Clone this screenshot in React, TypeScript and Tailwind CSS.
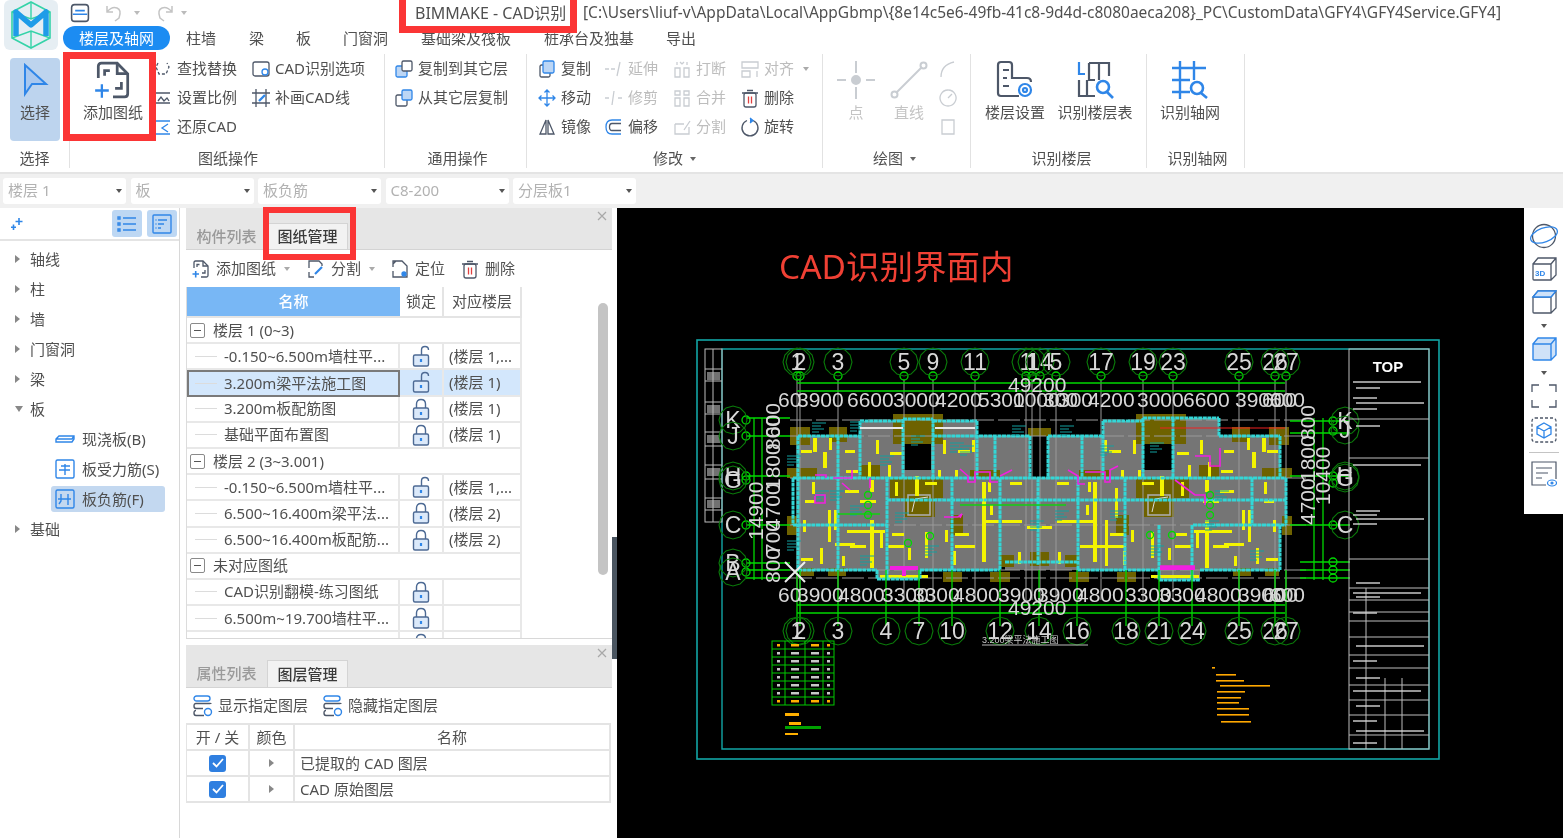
import React from "react";

const BLUE = "#2f86e8";
const SLATE = "#4d5768";
const FAINT = "#c9cdd2";

type IconProps = { size?: number; children: React.ReactNode; className?: string };

const Ico = ({ size = 20, children, className }: IconProps) => (
  <svg width={size} height={size} viewBox="0 0 20 20" fill="none" strokeWidth="1.3" stroke={SLATE} className={`shrink-0 ${className ?? ""}`}>
    {children}
  </svg>
);

const Caret = ({ color = "#666" }: { color?: string }) => (
  <span className="inline-block w-0 h-0 border-l-[3.5px] border-r-[3.5px] border-t-[4px] border-l-transparent border-r-transparent" style={{ borderTopColor: color }} />
);

const SheetPlus = ({ size = 20, thin }: { size?: number; thin?: boolean }) => (
  <Ico size={size}>
    <path d="M3 9V3.5Q3 2 4.5 2H12L17 7V16.5Q17 18 15.5 18H10" />
    <path d="M12 2V7H17" />
    <path d="M6 8V5.5H8.5M14 11V14H11" />
    <path d="M1.5 15H8M4.7 12V18.5" stroke={BLUE} strokeWidth={thin ? 1.1 : 1.6} />
  </Ico>
);

const Lock = ({ open }: { open: boolean }) => (
  <svg width="22" height="22" viewBox="0 0 22 22" fill="none" stroke="#4d6a94" strokeWidth="1.4">
    <rect x="3.5" y="10" width="15" height="11" rx="1.5" fill="#dbe9fa" />
    {open ? <path d="M11.5 10V5Q11.5 1.5 15 1.5T18.5 5" /> : <path d="M6.5 10V6Q6.5 1.5 11 1.5T15.5 6V10" />}
    <path d="M11 14V17" stroke={BLUE} strokeWidth="2.2" />
  </svg>
);

const Logo = () => (
  <div className="w-[54px] h-[50px] ml-[4px] bg-[#e6eef3] rounded-md flex items-center justify-center">
    <svg width="44" height="48" viewBox="0 0 44 48" fill="none">
      <path d="M22 1L41 11V37L22 47L3 37V11Z" stroke="#35d3a8" strokeWidth="1.6" />
      <path d="M22 1V18M22 30V47M3 11L22 18L41 11M3 37L22 30L41 37" stroke="#35d3a8" strokeWidth="1.4" />
      <path d="M7 35V11L22 24L37 11V35" stroke="#1f9ce8" strokeWidth="5.5" strokeLinejoin="round" />
    </svg>
  </div>
);

const Btn = ({ icon, label, muted, caret }: { icon: React.ReactNode; label: string; muted?: boolean; caret?: boolean }) => (
  <div className={`flex items-center gap-[4px] h-[29px] whitespace-nowrap ${muted ? "text-[#bdbdbd]" : "text-[#505050]"}`}>
    {icon}
    <span>{label}</span>
    {caret && <span className="ml-[5px] flex"><Caret color="#aaa" /></span>}
  </div>
);

const Group = ({ label, width, caret, labelClass, children }: { label: string; width: string; caret?: boolean; labelClass?: string; children: React.ReactNode }) => (
  <div className={`${width} shrink-0 h-[114px] border-r border-[#e2e2e2] flex flex-col`}>
    <div className="h-[86px] flex">{children}</div>
    <div className={`flex-1 flex items-center justify-center gap-[7px] text-[#505050] pt-[9px] ${labelClass ?? ""}`}>
      {label}
      {caret && <Caret />}
    </div>
  </div>
);

const Big = ({ icon, label, muted }: { icon: React.ReactNode; label: string; muted?: boolean }) => (
  <div className={`flex flex-col items-center pt-[5px] whitespace-nowrap ${muted ? "text-[#c4c4c4]" : "text-[#505050]"}`}>
    <div className="h-[41px] flex items-center">{icon}</div>
    <div className="mt-[5px]">{label}</div>
  </div>
);

const Faint = ({ d }: { d: string }) => (
  <Ico>
    <path d={d} stroke={FAINT} />
  </Ico>
);

const Ribbon = () => (
  <div className="h-[122px] flex items-start pt-[2px] border-b-2 border-[#e4e4e4]">
    <Group label="选择" width="w-[70px]">
      <div className="ml-[10px] mt-[4px] w-[50px] h-[83px] bg-[#bdd4ee] rounded-[4px] flex flex-col items-center pt-[5px] text-[#505050]">
        <svg width="30" height="34" viewBox="0 0 30 34" fill="#a9c8ef" stroke={BLUE} strokeWidth="2"><path d="M5 2V31L12 21L26 21Z" /></svg>
        <div className="mt-[8px]">选择</div>
      </div>
    </Group>
    <Group label="图纸操作" width="w-[315px]" labelClass="pl-[2px]">
      <div className="w-[84px] pl-[2px]">
        <Big icon={<SheetPlus size={42} thin />} label="添加图纸" />
      </div>
      <div className="w-[96px] -ml-px mr-px">
        <Btn label="查找替换" icon={<Ico><path d="M5 4L3 8L6 15H13L16 8L14 4" strokeDasharray="3 2" /></Ico>} />
        <Btn label="设置比例" icon={<Ico><path d="M3 5H17M3 15H17M5 13L8 9L11 13L14 10L16 13" /></Ico>} />
        <Btn label="还原CAD" icon={<Ico><path d="M2 4H17M2 17H17M15 7L9 11L15 15" stroke={BLUE} /></Ico>} />
      </div>
      <div className="pl-[1px]">
        <Btn label="CAD识别选项" icon={<Ico><rect x="2" y="3" width="16" height="14" rx="2" /><circle cx="14" cy="13" r="3" stroke={BLUE} /></Ico>} />
        <Btn label="补画CAD线" icon={<Ico><path d="M5 1V19M15 1V19M1 5H19M1 15H19" /><path d="M8 13L14 7" stroke={BLUE} strokeWidth="2.4" /></Ico>} />
      </div>
    </Group>
    <Group label="通用操作" width="w-[142px]" labelClass="pl-[4px]">
      <div className="pl-[9px]">
        <Btn label="复制到其它层" icon={<Ico><rect x="2" y="7" width="11" height="11" rx="1.5" fill="#bcd6f5" stroke={BLUE} /><rect x="8" y="2" width="10" height="10" rx="1.5" fill="#fff" /></Ico>} />
        <Btn label="从其它层复制" icon={<Ico><rect x="2" y="7" width="11" height="11" rx="1.5" /><rect x="8" y="2" width="10" height="10" rx="1.5" fill="#bcd6f5" stroke={BLUE} /></Ico>} />
      </div>
    </Group>
    <Group label="修改" width="w-[296px]" caret>
      <div className="w-[77px] pl-[10px]">
        <Btn label="复制" icon={<Ico><rect x="3" y="6" width="10" height="12" rx="1.5" /><rect x="6" y="2" width="11" height="12" rx="1.5" fill="#bcd6f5" stroke={BLUE} /></Ico>} />
        <Btn label="移动" icon={<Ico><path d="M10 2V18M2 10H18M7.5 4.5L10 2L12.5 4.5M7.5 15.5L10 18L12.5 15.5M4.5 7.5L2 10L4.5 12.5M15.5 7.5L18 10L15.5 12.5" stroke={BLUE} /></Ico>} />
        <Btn label="镜像" icon={<Ico><path d="M9 3L3 17H9ZM11 3L17 17H11Z" /></Ico>} />
      </div>
      <div className="w-[68px]">
        <Btn muted label="延伸" icon={<Faint d="M1 10H5M7 10H11M16 3L13 17" />} />
        <Btn muted label="修剪" icon={<Faint d="M1 10H5M14 10H18M10 3L8 17" />} />
        <Btn label="偏移" icon={<Ico><path d="M17 3H8Q2 3 2 10T8 17H17" stroke={BLUE} /><path d="M17 6.5H8Q5.5 6.5 5.5 10T8 13.5H17" /></Ico>} />
      </div>
      <div className="w-[68px]">
        <Btn muted label="打断" icon={<Faint d="M3 9H8V18H3ZM12 9H17V18H12ZM5 6V3M15 6V3M8 3L10 5M12 3L10 5" />} />
        <Btn muted label="合并" icon={<Faint d="M3 10H8V18H3ZM12 10H17V18H12ZM3 3H8V7H3ZM12 3H17V7H12Z" />} />
        <Btn muted label="分割" icon={<Faint d="M3 7H12M3 7V17H17V10M12 13L18 4" />} />
      </div>
      <div>
        <Btn muted caret label="对齐" icon={<Faint d="M2 3H18V9H2ZM2 12H10V18H2ZM17 12V18" />} />
        <Btn label="删除" icon={<Ico><rect x="4" y="5" width="12" height="14" rx="2" /><path d="M7 2.5H13M2 5H18" /><path d="M8.5 8.5V15.5M11.5 8.5V15.5" stroke="#e04040" /></Ico>} />
        <Btn label="旋转" icon={<Ico><path d="M7 3.5A8 8 0 1 0 13 3.5" /><path d="M10 1L13 3.5L10 6" fill={BLUE} stroke={BLUE} /></Ico>} />
      </div>
    </Group>
    <Group label="绘图" width="w-[148px]" caret labelClass="pr-[4px]">
      <div className="w-[66px] flex justify-center">
        <Big muted label="点" icon={<svg width="40" height="40" viewBox="0 0 40 40" fill="none" stroke={FAINT} strokeWidth="2"><path d="M20 1V13M20 27V39M1 20H10M30 20H39" /><circle cx="20" cy="20" r="4" fill={FAINT} /></svg>} />
      </div>
      <div className="w-[40px] flex justify-center">
        <Big muted label="直线" icon={<svg width="38" height="38" viewBox="0 0 38 38" fill="none" stroke={FAINT} strokeWidth="2"><path d="M6 32L32 6" /><circle cx="4.5" cy="33.5" r="3" /><circle cx="33.5" cy="4.5" r="3" /></svg>} />
      </div>
      <div className="ml-[9px]">
        <div className="h-[29px] flex items-center"><Faint d="M3 18Q3 6 16 3" /></div>
        <div className="h-[29px] flex items-center"><Faint d="M10 2A8 8 0 1 0 10.1 2M10 10L14 6" /></div>
        <div className="h-[29px] flex items-center"><Faint d="M4 3H16V17H4Z" /></div>
      </div>
    </Group>
    <Group label="识别楼层" width="w-[176px]" labelClass="pl-[6px]">
      <div className="w-[86px] flex justify-center pl-[2px]">
        <Big label="楼层设置" icon={<svg width="40" height="40" viewBox="0 0 40 40" fill="none" stroke={SLATE} strokeWidth="2.2"><path d="M24 36H6Q3 36 3 33V5Q3 2 6 2H14Q17 2 17 5V18H32Q36 18 36 22" /><path d="M8 10H14M8 18H12M8 26H14" /><circle cx="30" cy="30" r="6" stroke={BLUE} /><circle cx="30" cy="30" r="2" stroke={BLUE} /></svg>} />
      </div>
      <div className="flex justify-center w-[76px]">
        <Big label="识别楼层表" icon={<svg width="40" height="40" viewBox="0 0 40 40" fill="none" stroke={SLATE} strokeWidth="2.2"><path d="M4 2V14H10" stroke={BLUE} /><path d="M14 3H34V16M24 3V20M14 3V20H20M4 20V36H20M12 20V36" /><circle cx="28" cy="27" r="6" stroke={BLUE} strokeWidth="2.6" /><path d="M32 32L38 38" stroke={BLUE} strokeWidth="2.6" /></svg>} />
      </div>
    </Group>
    <Group label="识别轴网" width="w-[98px]" labelClass="pl-[4px]">
      <div className="w-[86px] flex justify-center">
        <Big label="识别轴网" icon={<svg width="40" height="40" viewBox="0 0 40 40" fill="none" stroke={BLUE} strokeWidth="2.4"><path d="M10 1V39M24 1V20M2 8H36M2 20H20M2 32H20" /><circle cx="27" cy="28" r="6" strokeWidth="2.6" /><path d="M31 33L37 38" strokeWidth="2.6" /></svg>} />
      </div>
    </Group>
  </div>
);

const selects = ["楼层 1", "板", "板负筋", "C8-200", "分层板1"];

const Selects = () => (
  <div className="h-[34px] pb-[1px] bg-[#f0f0f0] flex items-center gap-[4.5px] pl-[3px]">
    {selects.map((s) => (
      <div key={s} className="w-[123px] h-[26px] bg-white rounded-[3px] flex items-center justify-between pl-[5px] pr-[4px] text-[#b2b2b2]">
        {s}
        <Caret color="#555" />
      </div>
    ))}
  </div>
);

const tree = ["轴线", "柱", "墙", "门窗洞", "梁"];

const TreeArrow = ({ down }: { down?: boolean }) =>
  down ? (
    <span className="w-0 h-0 border-l-[4px] border-r-[4px] border-t-[6px] border-l-transparent border-r-transparent border-t-[#888]" />
  ) : (
    <span className="w-0 h-0 border-t-[4px] border-b-[4px] border-l-[5px] border-t-transparent border-b-transparent border-l-[#888]" />
  );

const TreeRow = ({ label, down }: { label: string; down?: boolean }) => (
  <div className="h-[30px] flex items-center text-[#505050]">
    <span className="w-[30px] pl-[15px] flex items-center"><TreeArrow down={down} /></span>
    {label}
  </div>
);

const TreeChild = ({ label, active, icon }: { label: string; active?: boolean; icon: React.ReactNode }) => (
  <div className="h-[30px] flex items-center">
    <div className={`ml-[51px] mr-[14px] flex-1 h-[26px] rounded-[3px] flex items-center gap-[6px] pl-[3px] text-[#505050] ${active ? "bg-[#c3d8f0]" : ""}`}>
      {icon}
      {label}
    </div>
  </div>
);

const LeftPanel = () => (
  <div className="w-[180px] shrink-0 border-r border-[#d8d8d8]">
    <div className="h-[33px] flex items-center border-b-2 border-[#e4e4e4] pl-[10px] pr-[2px]">
      <svg width="14" height="14" viewBox="0 0 14 14" stroke={BLUE} strokeWidth="1.6"><path d="M9 1V8M5.5 4.5H12.5M3.5 7.5V13M1 10.2H6" /></svg>
      <div className="ml-auto flex gap-[5px]">
        <div className="w-[30px] h-[27px] bg-[#bdd7f3] rounded-[3px] flex items-center justify-center">
          <svg width="20" height="18" viewBox="0 0 20 18" fill="none" stroke={BLUE} strokeWidth="1.4"><path d="M6 3H19M6 9H19M6 15H19M1 2H3V4H1ZM1 8H3V10H1ZM1 14H3V16H1Z" /></svg>
        </div>
        <div className="w-[30px] h-[27px] bg-[#bdd7f3] rounded-[3px] flex items-center justify-center">
          <svg width="20" height="20" viewBox="0 0 20 20" fill="none" stroke={BLUE} strokeWidth="1.4"><rect x="1" y="1" width="18" height="18" rx="1" /><path d="M6 6H15M6 10H12M6 14H9M3.5 6H4.5M3.5 10H4.5M3.5 14H4.5" /></svg>
        </div>
      </div>
    </div>
    <div className="pt-[3px]">
      {tree.map((t) => <TreeRow key={t} label={t} />)}
      <TreeRow label="板" down />
      <TreeChild label="现浇板(B)" icon={<svg width="22" height="20" viewBox="0 0 22 20" fill="none" stroke={BLUE} strokeWidth="1.4"><path d="M2 10L5 7H20V10L18 13H2ZM2 10H18L20 7" /></svg>} />
      <TreeChild label="板受力筋(S)" icon={<svg width="22" height="22" viewBox="0 0 22 22" fill="none" stroke={BLUE} strokeWidth="1.4"><rect x="2" y="2" width="18" height="18" rx="1.5" /><path d="M7 8H16M5 12H16M11 6V17" /></svg>} />
      <TreeChild label="板负筋(F)" active icon={<svg width="22" height="22" viewBox="0 0 22 22" fill="none" stroke={BLUE} strokeWidth="1.4"><rect x="2" y="2" width="18" height="18" rx="1.5" /><path d="M7 6V13L5 16M14 6V17M4 11H17" /></svg>} />
      <TreeRow label="基础" />
    </div>
  </div>
);

const CloseStrip = () => (
  <div className="h-[15px] bg-[#e6e6e6] flex items-center justify-end pr-[5px]">
    <svg width="10" height="10" viewBox="0 0 10 10" stroke="#a8a8a8" strokeWidth="1.2"><path d="M1 1L9 9M9 1L1 9" /></svg>
  </div>
);

const Tabs = ({ first, second, height }: { first: string; second: string; height: string }) => (
  <div className={`${height} bg-[#e6e6e6] border-b border-[#d4d4d4] flex items-stretch font-medium`}>
    <div className="w-[81px] flex items-center justify-center text-[#9a9a9a]">{first}</div>
    <div className="w-[81px] bg-[#f2f2f2] border-x border-t border-[#d4d4d4] flex items-center justify-center text-[#3a3a3a]">{second}</div>
  </div>
);

type Row =
  | { group: string }
  | { name: string; open?: boolean; floor?: string; selected?: boolean };

const rows: Row[] = [
  { group: "楼层 1 (0~3)" },
  { name: "-0.150~6.500m墙柱平...", open: true, floor: "(楼层 1,..." },
  { name: "3.200m梁平法施工图", open: true, floor: "(楼层 1)", selected: true },
  { name: "3.200m板配筋图", floor: "(楼层 1)" },
  { name: "基础平面布置图", floor: "(楼层 1)" },
  { group: "楼层 2 (3~3.001)" },
  { name: "-0.150~6.500m墙柱平...", open: true, floor: "(楼层 1,..." },
  { name: "6.500~16.400m梁平法...", floor: "(楼层 2)" },
  { name: "6.500~16.400m板配筋...", floor: "(楼层 2)" },
  { group: "未对应图纸" },
  { name: "CAD识别翻模-练习图纸" },
  { name: "6.500m~19.700墙柱平..." },
  { name: "" },
];

const DrawingTable = () => (
  <div className="relative h-[352px] overflow-hidden border-b border-[#d8d8d8]">
    <div className="w-[336px] border-l border-[#dcdcdc]">
      <div className="flex h-[31px] border-b-2 border-[#e4e4e4]">
        <div className="w-[213px] bg-[#78b7f5] text-white flex items-center justify-center font-medium">名称</div>
        <div className="w-[44px] border-r-2 border-[#e4e4e4] flex items-center justify-center text-[#505050]">锁定</div>
        <div className="w-[78px] border-r-2 border-[#e4e4e4] flex items-center justify-center text-[#505050]">对应楼层</div>
      </div>
      {rows.map((r, i) =>
        "group" in r ? (
          <div key={i} className="h-[26.2px] border-b-2 border-r-2 border-[#e8e8e8] flex items-center text-[#505050]">
            <span className="ml-[3px] w-[15px] h-[15px] border border-[#8a8a8a] rounded-[2px] flex items-center justify-center mr-[8px]">
              <span className="w-[7px] h-px bg-[#555]" />
            </span>
            {r.group}
          </div>
        ) : (
          <div key={i} className={`h-[26.2px] flex border-[#e8e8e8] ${r.selected ? "bg-[#d3e7fc]" : ""}`}>
            <div className={`w-[213px] flex items-center whitespace-nowrap text-[#505050] ${r.selected ? "border-2 border-[#7a7a7a]" : "border-b-2 border-r-2 border-[#e8e8e8]"}`}>
              <span className={`${r.selected ? "ml-[6px]" : "ml-[8px]"} w-[22px] mr-[7px] h-px bg-[#dcdcdc] shrink-0`} />
              <span>{r.name}</span>
            </div>
            <div className="w-[44px] border-b-2 border-r-2 border-[#e8e8e8] flex items-center justify-center">
              <Lock open={!!r.open} />
            </div>
            <div className="w-[78px] border-b-2 border-r-2 border-[#e8e8e8] flex items-center pl-[5px] text-[#505050] whitespace-nowrap">{r.floor}</div>
          </div>
        )
      )}
    </div>
    <div className="absolute right-[4px] top-[16px] w-[10px] h-[272px] bg-[#c4c4c4] rounded-full" />
  </div>
);

const ToolBtn = ({ icon, label, caret }: { icon: React.ReactNode; label: string; caret?: boolean }) => (
  <div className="flex items-center gap-[5px] text-[#505050] whitespace-nowrap">
    {icon}
    {label}
    {caret && <span className="ml-[3px] flex"><Caret color="#aaa" /></span>}
  </div>
);

const layerRows = ["已提取的 CAD 图层", "CAD 原始图层"];

const LayerIcon = () => (
  <svg width="20" height="22" viewBox="0 0 20 22" fill="none" stroke={BLUE} strokeWidth="1.4">
    <rect x="1" y="1" width="16" height="5" rx="2.5" />
    <path d="M3 8.5H17Q18 8.5 18 9M3 8.5Q1 8.5 1 11T3 13.5H10M3 15.5Q1 15.5 1 18T3 20.5H11" stroke={SLATE} />
    <circle cx="15" cy="17" r="3.5" />
  </svg>
);

const MiddlePanel = () => (
  <div className="w-[426px] shrink-0 ml-[6px] flex flex-col">
    <CloseStrip />
    <Tabs first="构件列表" second="图纸管理" height="h-[27px]" />
    <div className="h-[37px] flex items-center pl-[5px]">
      <ToolBtn caret label="添加图纸" icon={<SheetPlus />} />
      <div className="ml-[16px]"><ToolBtn caret label="分割" icon={<Ico><path d="M3 9V2H13L16 5V7M3 13V18H8" /><path d="M9 15L16 8" stroke={BLUE} strokeWidth="2.2" /></Ico>} /></div>
      <div className="ml-[15px]"><ToolBtn label="定位" icon={<Ico><path d="M3 8V2H12L17 7V18H3V12M6 2L3 5" /><circle cx="14" cy="15" r="2" fill={BLUE} stroke={BLUE} /></Ico>} /></div>
      <div className="ml-[15px]"><ToolBtn label="删除" icon={<Ico><rect x="4" y="5" width="12" height="14" rx="2" /><path d="M7 2.5H13M2 5H18" /><path d="M8.5 8.5V15.5M11.5 8.5V15.5" stroke="#e04040" /></Ico>} /></div>
    </div>
    <DrawingTable />
    <div className="h-[6px]" />
    <CloseStrip />
    <Tabs first="属性列表" second="图层管理" height="h-[28px]" />
    <div className="h-[35px] flex items-center gap-[15px] pl-[7px]">
      <ToolBtn label="显示指定图层" icon={<LayerIcon />} />
      <ToolBtn label="隐藏指定图层" icon={<LayerIcon />} />
    </div>
    <div className="border-t-2 border-[#e4e4e4] border-l border-[#dcdcdc] mr-[1px] text-[#505050]">
      <div className="flex h-[26px] border-b-2 border-[#e4e4e4] items-stretch">
        <div className="w-[63px] border-r-2 border-[#e4e4e4] flex items-center justify-center">开 / 关</div>
        <div className="w-[45px] border-r-2 border-[#e4e4e4] flex items-center justify-center">颜色</div>
        <div className="flex-1 flex items-center justify-center border-r-2 border-[#e4e4e4]">名称</div>
      </div>
      {layerRows.map((l) => (
        <div key={l} className="flex h-[26px] border-b-2 border-[#e4e4e4] items-stretch">
          <div className="w-[63px] border-r-2 border-[#e4e4e4] flex items-center justify-center">
            <span className="w-[17px] h-[17px] rounded-[3px] bg-[#2f7fe0] flex items-center justify-center">
              <svg width="12" height="10" viewBox="0 0 12 10" fill="none" stroke="#fff" strokeWidth="1.8"><path d="M1 5L4.5 8.5L11 1" /></svg>
            </span>
          </div>
          <div className="w-[45px] border-r-2 border-[#e4e4e4] flex items-center justify-center"><TreeArrow /></div>
          <div className="flex-1 flex items-center pl-[5px] border-r-2 border-[#e4e4e4]">{l}</div>
        </div>
      ))}
    </div>
  </div>
);

// left half of the plan, the right half is mirrored about this axis
const MID = 2079;

const yellowBars: number[][] = [
  [813, 438, 4, 14], [801, 450, 11, 3], [823, 452, 4, 16], [829, 438, 3, 12], [845, 450, 10, 3], [846, 470, 12, 3],
  [876, 440, 3, 14], [890, 452, 12, 3], [868, 462, 3, 15], [888, 465, 3, 12], [915, 476, 4, 20], [938, 470, 3, 8],
  [943, 440, 3, 14], [958, 450, 12, 3], [955, 470, 3, 8], [972, 440, 3, 12], [982, 482, 4, 80], [986, 520, 14, 3],
  [988, 482, 3, 10], [1002, 520, 20, 3], [1027, 526, 14, 3], [805, 500, 10, 3], [812, 482, 3, 12], [803, 520, 3, 12],
  [828, 510, 3, 32], [834, 510, 3, 20], [870, 480, 4, 12], [870, 520, 4, 48], [847, 530, 38, 3], [835, 543, 20, 3],
  [880, 532, 3, 16], [820, 548, 3, 16], [801, 558, 12, 3], [842, 556, 3, 10], [850, 545, 16, 3], [892, 533, 12, 3],
  [888, 545, 16, 3], [925, 532, 3, 26], [908, 548, 3, 12], [945, 530, 3, 12], [955, 533, 14, 3], [955, 545, 20, 3],
  [953, 551, 3, 14], [1018, 552, 3, 12], [1080, 545, 46, 3], [1105, 520, 3, 46], [1115, 488, 3, 30], [880, 575, 48, 3],
  [895, 482, 3, 14], [925, 482, 12, 3], [845, 490, 14, 3], [860, 500, 16, 3], [990, 505, 3, 10], [1010, 482, 12, 3],
];

const olive: number[][] = [
  [790, 427, 20, 18], [829, 427, 18, 15], [893, 414, 50, 30], [787, 468, 30, 10], [787, 516, 10, 19], [950, 515, 13, 20],
  [943, 572, 19, 10], [990, 572, 20, 10], [800, 568, 14, 8], [828, 568, 18, 8], [890, 478, 53, 20], [905, 495, 30, 22],
  [970, 470, 30, 8], [1028, 428, 20, 8], [860, 465, 20, 13], [1000, 555, 14, 12], [1030, 552, 16, 14],
];

const walls: number[][] = [
  [860, 421, 903, 421], [903, 419, 933, 419], [933, 421, 977, 421], [798, 436, 860, 436], [933, 436, 1030, 436], [1048, 436, 1103, 436],
  [793, 478, 1286, 478], [793, 525, 887, 525], [887, 500, 1286, 500], [798, 570, 877, 570], [877, 579, 920, 579], [920, 570, 1000, 570],
  [1005, 562, 1077, 562], [1077, 570, 1159, 570], [1103, 421, 1143, 421], [1143, 418, 1219, 418], [1219, 436, 1280, 436], [1193, 525, 1286, 525],
  [1200, 570, 1280, 570], [1159, 580, 1200, 580],
  [798, 436, 798, 570], [838, 436, 838, 570], [860, 421, 860, 478], [887, 478, 887, 579], [903, 419, 903, 478], [933, 419, 933, 478],
  [952, 478, 952, 570], [977, 421, 977, 478], [1000, 478, 1000, 570], [995, 436, 995, 478], [1030, 436, 1030, 478], [1038, 478, 1038, 565],
  [1048, 436, 1048, 478], [1078, 478, 1078, 570], [1082, 436, 1082, 478], [1103, 421, 1103, 478], [1125, 478, 1125, 570], [1143, 418, 1143, 478],
  [1173, 418, 1173, 478], [1219, 418, 1219, 436], [1280, 436, 1280, 478], [1286, 478, 1286, 525], [1280, 525, 1280, 570], [1159, 525, 1159, 580],
  [1192, 525, 1192, 580], [1252, 478, 1252, 525], [793, 478, 793, 525], [877, 570, 877, 579], [920, 570, 920, 579],
];

const magenta: string[] = [
  "M960 469L968 476V482H975V472H990V482H998M1000 476L1012 470",
  "M1068 470L1078 476V484H1085M1085 472H1105V482H1110V470L1118 466",
  "M815 475H826V478M833 478H852V470",
  "M815 495H825V503H815V496M870 478V488M842 483L850 490",
  "M944 517H958L962 514L960 518",
  "M1195 456H1210V466H1220V448M1175 480L1195 495H1205V505",
  "M1160 566H1195",
];

const topAxes: [string, number][] = [["1", 797], ["2", 800], ["3", 838], ["5", 904], ["9", 933], ["11", 975], ["1", 1026], ["1", 1032], ["14", 1040], ["5", 1056], ["17", 1101], ["19", 1143], ["23", 1173], ["25", 1239], ["26", 1275], ["27", 1286]];
const bottomAxes: [string, number][] = [["1", 797], ["2", 800], ["3", 838], ["4", 886], ["7", 919], ["10", 952], ["12", 1000], ["14", 1039], ["16", 1077], ["18", 1126], ["21", 1159], ["24", 1192], ["25", 1239], ["26", 1275], ["27", 1286]];
const topDims: [string, number][] = [["60", 778], ["3900", 797], ["6600", 847], ["3000", 893], ["4200", 935], ["5300", 978], ["1000", 1013], ["300", 1043], ["300", 1058], ["4200", 1088], ["3000", 1137], ["6600", 1183], ["3900", 1235], ["600", 1262], ["600", 1270]];
const bottomDims: [string, number][] = [["60", 778], ["3900", 797], ["4800", 838], ["3300", 882], ["3300", 913], ["4800", 953], ["3900", 998], ["3900", 1037], ["4800", 1077], ["3300", 1125], ["3300", 1159], ["4800", 1195], ["3900", 1238], ["600", 1263], ["600", 1270]];
const leftAxes: [string, number][] = [["K", 420], ["J", 436], ["H", 476], ["G", 480], ["C", 525], ["B", 563], ["A", 572]];
const rightAxes: [string, number][] = [["K", 421], ["J", 430], ["H", 476], ["G", 478], ["C", 525]];
const teal: number[][] = [[812, 422], [850, 421], [880, 455], [911, 435], [950, 442], [1012, 425], [1060, 425], [1100, 445], [1150, 442], [815, 490], [860, 555], [925, 545], [1030, 520], [1055, 510], [1215, 490], [1205, 520], [1150, 545], [1250, 550], [830, 490], [787, 455], [787, 540], [850, 505], [895, 512], [960, 445], [1110, 510]];

const Bubble = ({ x, y, r = 14 }: { x: number; y: number; r?: number }) => {
  const pts = Array.from({ length: 12 }, (_, i) => {
    const a = (i * Math.PI) / 6;
    return `${x + r * Math.cos(a)},${y + r * Math.sin(a)}`;
  }).join(" ");
  return <polygon points={pts} fill="none" stroke="#0a7a0a" strokeWidth="1.1" />;
};

const TitleBlock = () => {
  const ys = [419, 458, 559, 588, 600, 612, 621, 637, 655, 668, 685, 700, 715, 735];
  return (
    <g stroke="#bdbdbd" strokeWidth="1">
      <rect x="1349" y="349" width="80" height="400" fill="none" />
      {ys.map((y) => <line key={y} x1="1349" x2="1429" y1={y} y2={y} />)}
      <line x1="1366" x2="1366" y1="588" y2="749" />
      <line x1="1385" x2="1385" y1="678" y2="749" />
      <line x1="1402" x2="1402" y1="678" y2="749" />
      <text x="1388" y="372" fill="#fff" stroke="none" fontSize="15" fontWeight="700" textAnchor="middle" fontFamily="'Liberation Sans', sans-serif">TOP</text>
      {[381, 387, 397, 402, 408, 425, 464, 510, 514, 518, 523, 582, 592, 596, 612, 645, 660, 677, 690, 705, 720, 730, 742].map((y, i) => (
        <rect key={y} x={i % 2 ? 1356 : 1353} y={y} width={i % 3 === 0 ? 68 : 24} height="2" fill="#d4d4d4" stroke="none" opacity="0.7" />
      ))}
    </g>
  );
};

const CadDrawing = () => {
  const dimFont = { fontFamily: "'Liberation Sans', sans-serif", fontSize: 21, fill: "#d8d8d8" };
  const bubbleFont = { ...dimFont, fontSize: 23 };
  return (
    <svg viewBox="617 208 946 630" className="absolute inset-0 w-full h-full blur-[0.3px]">
      {/* sheet frame */}
      <rect x="697" y="340" width="742" height="419" fill="none" stroke="#12a5a5" strokeWidth="1.6" />
      <path d="M722 349H1429V749H722Z" fill="none" stroke="#12a5a5" strokeWidth="1.4" />
      <rect x="705" y="349" width="17" height="173" fill="none" stroke="#bdbdbd" />
      <line x1="713" x2="713" y1="349" y2="522" stroke="#bdbdbd" />
      {[369, 381, 402, 414, 432, 446, 465, 479, 498, 510].map((y) => <line key={y} x1="705" x2="722" y1={y} y2={y} stroke="#bdbdbd" />)}
      {[372, 405, 435, 468, 500].map((y) => <rect key={y} x="707" y={y} width="13" height="8" fill="#bdbdbd" opacity="0.6" />)}

      {/* floor slabs */}
      <path d="M798 436H860V421H903V470H931V421H977V436H1030V478H1048V436H1103V421H1143V470H1173V418H1219V436H1280V478H1286V525H1280V570H1200V580H1159V570H1005V562H1000V570H920V579H877V570H798Z" fill="#757575" />
      {olive.flatMap(([x, y, w, h], i) => [
        <rect key={`o${i}`} x={x} y={y} width={w} height={h} fill="#6e6200" />,
        <rect key={`m${i}`} x={MID - x - w} y={y} width={w} height={h} fill="#6e6200" />,
      ])}
      <rect x="908" y="495" width="22" height="20" fill="#6e6200" stroke="#aaa" strokeWidth="1.6" />
      <rect x="1148" y="495" width="22" height="20" fill="#6e6200" stroke="#aaa" strokeWidth="1.6" />
      <path d="M912 512L915 499L928 497M1152 512L1155 499L1168 497" fill="none" stroke="#ddd" />

      {/* axis lines */}
      <g stroke="#9a9a9a" strokeWidth="1">
        {[420, 436, 478, 525, 570, 578].map((y) => <line key={y} x1="790" x2="1310" y1={y} y2={y} strokeDasharray="22 4" />)}
        {topAxes.map(([t, x]) => <line key={t + x} x1={x} x2={x} y1="380" y2="600" />)}
      </g>
      {yellowBars.flatMap(([x, y, w, h], i) => [
        <rect key={`y${i}`} x={x} y={y} width={w} height={h} fill="#f4f400" />,
        x < 1039 ? <rect key={`z${i}`} x={MID - x - w} y={y} width={w} height={h} fill="#f4f400" /> : null,
      ])}
      <g stroke="#33d6d6" strokeWidth="3" strokeDasharray="4 0.6">
        {walls.map(([a, b, c, d], i) => <line key={i} x1={a} y1={b} x2={c} y2={d} />)}
      </g>
      <g stroke="#12a0a0" strokeWidth="1.2">
        {teal.map(([x, y]) => <path key={`${x}${y}`} d={`M${x} ${y + 1}H${x + 14}M${x} ${y + 4}H${x + 9}M${x} ${y + 7}H${x + 12}M${x} ${y + 10}H${x + 7}`} />)}
      </g>
      <path d="M1160 428H1285" stroke="#f02020" strokeWidth="1.2" />
      <path d="M860 428H903M935 428H975" stroke="#e8e8e8" strokeWidth="2" />
      <g fill="none" stroke="#f020e0" strokeWidth="1.6">
        {magenta.map((d) => <path key={d} d={d} />)}
      </g>
      <path d="M890 566H918V570H890ZM902 566H906V576H902ZM1160 566H1195V570H1160Z" fill="#f020e0" />
      <path d="M960 505H1066M838 514H880" stroke="#12d012" strokeWidth="1.4" />

      {/* dimension lines */}
      <g stroke="#00d800" strokeWidth="1.3" fill="none">
        <path d="M797 383H1285M797 391H1285M797 605H1285M797 613H1285" />
        <path d="M754 418V580M762 418V580M1314 418V580M1323 418V580" />
        <path d="M746 418H790M746 436H790M746 476H790M746 525H790M746 563H790M746 570H790M746 578H790" />
        <path d="M1290 421H1350M1290 433H1350M1290 476H1350M1290 525H1350M1300 562H1350M1300 570H1350M1300 578H1350" />
        {bottomAxes.map(([t, x]) => <line key={t + x} x1={x} x2={x} y1="570" y2="626" />)}
        {topAxes.map(([t, x]) => <circle key={t + x} cx={x} cy="376" r="4" />)}
        {leftAxes.map(([t, y]) => <circle key={t + y} cx="746" cy={y} r="4" />)}
        {[[1333, 421], [1333, 431], [1333, 476], [1333, 483], [1333, 525], [1333, 562], [1333, 570], [1333, 578]].map(([x, y]) => <circle key={y} cx={x} cy={y} r="4" />)}
        {[[868, 495], [868, 505], [868, 515], [908, 543], [930, 536], [1210, 495], [1210, 505], [1210, 515], [1150, 535], [1172, 535]].map(([x, y]) => <circle key={`${x}${y}`} cx={x} cy={y} r="3.5" />)}
      </g>

      {/* axis bubbles */}
      {topAxes.map(([t, x]) => (
        <g key={t + x}>
          <Bubble x={x} y={362} />
          <text x={x} y="370" textAnchor="middle" {...bubbleFont}>{t}</text>
        </g>
      ))}
      {bottomAxes.map(([t, x]) => (
        <g key={t + x}>
          <Bubble x={x} y={631} />
          <text x={x} y="639" textAnchor="middle" {...bubbleFont}>{t}</text>
        </g>
      ))}
      {leftAxes.map(([t, y]) => (
        <g key={t + y}>
          <Bubble x={733} y={y} />
          <text x="733" y={y + 8} textAnchor="middle" {...bubbleFont}>{t}</text>
        </g>
      ))}
      {rightAxes.map(([t, y]) => (
        <g key={t + y}>
          <Bubble x={1345} y={y} />
          <text x="1345" y={y + 8} textAnchor="middle" {...bubbleFont}>{t}</text>
        </g>
      ))}

      {/* dimension values */}
      {topDims.map(([t, x]) => <text key={t + x} x={x} y="407" {...dimFont}>{t}</text>)}
      {bottomDims.map(([t, x]) => <text key={t + x} x={x} y="602" {...dimFont}>{t}</text>)}
      <text x="1008" y="392" {...dimFont}>49200</text>
      <text x="1008" y="615" {...dimFont}>49200</text>
      <text transform="translate(780 583) rotate(-90)" {...dimFont}>800</text>
      <text transform="translate(780 555) rotate(-90)" {...dimFont}>700</text>
      <text transform="translate(780 530) rotate(-90)" {...dimFont}>4700</text>
      <text transform="translate(780 490) rotate(-90)" {...dimFont}>1800</text>
      <text transform="translate(780 450) rotate(-90)" {...dimFont}>800</text>
      <text transform="translate(780 438) rotate(-90)" {...dimFont}>600</text>
      <text transform="translate(763 540) rotate(-90)" {...dimFont}>14900</text>
      <text transform="translate(1315 525) rotate(-90)" {...dimFont}>4700</text>
      <text transform="translate(1315 482) rotate(-90)" {...dimFont}>1800</text>
      <text transform="translate(1315 440) rotate(-90)" {...dimFont}>800</text>
      <text transform="translate(1330 505) rotate(-90)" {...dimFont}>10400</text>

      <path d="M785 562L805 582M805 562L785 582" stroke="#eee" strokeWidth="2" />
      <path d="M982 645H1088" stroke="#bbb" />
      <text x="982" y="643" fontSize="9" fill="#ccc" fontFamily="'Liberation Sans', 'Noto Sans CJK SC', sans-serif">3.200梁平法施工图</text>

      {/* rebar table */}
      <g stroke="#00c800" fill="none" strokeWidth="1">
        <rect x="772" y="641" width="62" height="64" />
        {[649, 657, 665, 673, 681, 689, 697].map((y) => <line key={y} x1="772" x2="834" y1={y} y2={y} />)}
        {[785, 805, 823].map((x) => <line key={x} x1={x} x2={x} y1="641" y2="705" />)}
      </g>
      {[644, 652, 660, 668, 676, 684, 692, 700].flatMap((y) => [777, 791, 811, 827].map((x) => (
        <rect key={`${x}${y}`} x={x} y={y} width={x === 777 || x === 827 ? 3 : 8} height="2.5" fill={y === 644 || y === 700 ? "#ffb000" : "#c8c8c8"} />
      )))}
      <rect x="785" y="713" width="14" height="3" fill="#ffb000" />
      <rect x="789" y="722" width="12" height="3" fill="#ffb000" />
      <rect x="785" y="726" width="36" height="3" fill="#00a000" />
      <rect x="785" y="733" width="13" height="2" fill="#ffb000" />
      {[[1212, 667, 3], [1216, 674, 20], [1216, 680, 28], [1220, 685, 50], [1217, 691, 28], [1217, 697, 24], [1217, 702, 22], [1217, 708, 32], [1217, 714, 32], [1221, 721, 30]].map(([x, y, w]) => (
        <rect key={y} x={x} y={y} width={w} height="1.6" fill="#ffa800" />
      ))}
      <TitleBlock />
    </svg>
  );
};

const ViewBar = () => (
  <div className="absolute right-0 top-0 w-[39px] h-[306px] bg-white flex flex-col items-center pt-[15px]">
    <svg width="30" height="26" viewBox="0 0 30 26" fill="none" stroke={SLATE} strokeWidth="1.3"><circle cx="15" cy="13" r="11.5" /><ellipse cx="15" cy="12" rx="14" ry="7" transform="rotate(-20 15 12)" stroke={BLUE} /></svg>
    {[0, 1].map((i) => (
      <svg key={i} width="26" height="26" viewBox="0 0 26 26" fill="none" stroke={SLATE} strokeWidth="1.3" className="mt-[7px]">
        <path d="M2 8H20V24H3Q2 24 2 23ZM2 8L7 2H25V19L20 24M20 8L25 2" />
        {i === 0 && <text x="4" y="20" fontSize="8" fontWeight="700" fill={BLUE} stroke="none" fontFamily="'Liberation Sans', sans-serif">3D</text>}
        {i === 1 && <path d="M2 8L7 2H25L20 8Z" fill="#cfe2f8" stroke={BLUE} />}
      </svg>
    ))}
    <span className="mt-[9px] flex"><Caret color="#555" /></span>
    <svg width="26" height="26" viewBox="0 0 26 26" fill="#cfe2f8" stroke={BLUE} strokeWidth="1.4" className="mt-[8px]"><path d="M2 8H20V24H3Q2 24 2 23ZM2 8L7 2H25V19L20 24M20 8L25 2" /></svg>
    <span className="mt-[9px] flex"><Caret color="#555" /></span>
    <svg width="26" height="26" viewBox="0 0 26 26" fill="none" stroke={SLATE} strokeWidth="1.3" className="mt-[8px]"><path d="M1 9V2H8M18 2H25V9M25 17V24H18M8 24H1V17" /></svg>
    <svg width="26" height="26" viewBox="0 0 26 26" fill="none" stroke={BLUE} strokeWidth="1.3" className="mt-[8px]"><rect x="1" y="1" width="24" height="24" rx="3" stroke={SLATE} strokeDasharray="3 2" /><path d="M13 6L20 10V17L13 21L6 17V10ZM6 10L13 14L20 10M13 14V21" /></svg>
    <div className="w-[30px] h-px bg-[#c4c4c4] mt-[9px]" />
    <svg width="26" height="26" viewBox="0 0 26 26" fill="none" stroke={SLATE} strokeWidth="1.2" className="mt-[8px]"><path d="M15 24H1V1H25V18" /><path d="M5 7H21M5 12H17M5 17H11" /><ellipse cx="21" cy="22" rx="4.5" ry="3" stroke={BLUE} /><circle cx="21" cy="22" r="1" fill={BLUE} stroke={BLUE} /></svg>
  </div>
);

export default function App() {
  return (
    <div className="relative w-[1563px] h-[838px] overflow-hidden bg-white text-[15px] leading-none blur-[0.35px] font-['Noto_Sans','Noto_Sans_CJK_SC',sans-serif] text-[#505050]">
      {/* title + tabs */}
      <div className="h-[52px] flex">
        <Logo />
        <div className="flex-1 ml-[1px]">
          <div className="h-[25px] flex items-center relative">
            <div className="ml-[9px] flex items-center gap-[7px]">
              <Ico size={24}><rect x="3" y="3" width="14" height="14" rx="2.5" /><path d="M6 8H14M4 11H16" stroke={BLUE} /></Ico>
              <svg width="22" height="20" viewBox="0 0 22 20" fill="none" stroke="#c4c4c4" strokeWidth="1.5" className="ml-[6px]"><path d="M2 3V9H8M2 9Q7 3 12 5T14 15L10 18" /></svg>
              <Caret color="#bbb" />
              <svg width="22" height="20" viewBox="0 0 22 20" fill="none" stroke="#c4c4c4" strokeWidth="1.5" className="ml-[5px] scale-x-[-1]"><path d="M2 3V9H8M2 9Q7 3 12 5T14 15L10 18" /></svg>
              <Caret color="#bbb" />
            </div>
            <span className="absolute left-[356px] top-[5px] text-[16px] whitespace-nowrap">BIMMAKE - CAD识别</span>
            <span className="absolute left-[524px] top-[5px] text-[15.5px] whitespace-nowrap">[C:\Users\liuf-v\AppData\Local\AppGbmp\{"{"}8e14c5e6-49fb-41c8-9d4d-c8080aeca208{"}"}_PC\CustomData\GFY4\GFY4Service.GFY4]</span>
          </div>
          <div className="h-[26px] flex items-center">
            <div className="ml-[4px] w-[107px] h-[24px] rounded-full bg-[#1c8cf2] text-white flex items-center justify-center">楼层及轴网</div>
            <span className="ml-[16px]">柱墙</span>
            <span className="ml-[33px]">梁</span>
            <span className="ml-[32px]">板</span>
            <span className="ml-[32px]">门窗洞</span>
            <span className="ml-[33px]">基础梁及筏板</span>
            <span className="ml-[33px]">桩承台及独基</span>
            <span className="ml-[32px]">导出</span>
          </div>
        </div>
      </div>
      <Ribbon />
      <Selects />
      <div className="h-[630px] flex">
        <LeftPanel />
        <MiddlePanel />
        <div className="w-[5px] shrink-0 relative">
          <div className="absolute left-0 top-[329px] w-[5px] h-[122px] bg-[#4a5560]" />
        </div>
        <div className="flex-1 relative bg-black">
          <CadDrawing />
          <div className="absolute left-[162px] top-[37px] text-[33.5px] leading-[42px] text-[#f04034] whitespace-nowrap">CAD识别界面内</div>
          <ViewBar />
        </div>
      </div>

      {/* red annotation boxes */}
      <div className="absolute left-[399px] top-[-8px] w-[178px] h-[41px] border-[7px] border-[#fb3535]" />
      <div className="absolute left-[63px] top-[52px] w-[93px] h-[89px] border-[7px] border-[#fb3535]" />
      <div className="absolute left-[263px] top-[207px] w-[93px] h-[53px] border-[6px] border-[#fb3535]" />
    </div>
  );
}
